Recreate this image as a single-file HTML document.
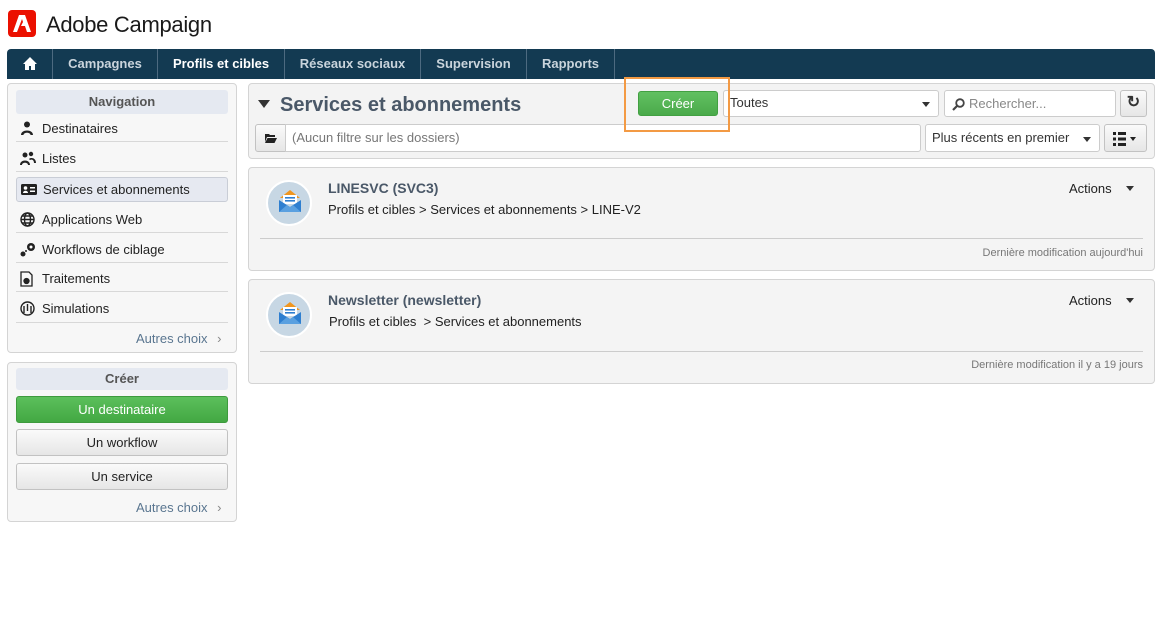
<!DOCTYPE html>
<html><head><meta charset="utf-8"><style>
*{box-sizing:border-box;margin:0;padding:0}
body{width:1163px;height:635px;background:#fff;font-family:"Liberation Sans",Arial,sans-serif;position:relative;overflow:hidden;color:#222}
.a{position:absolute}
.nav{left:7px;top:49px;width:1148px;height:30px;background:#133a52;border-radius:4px 4px 0 0}
.nav div{position:absolute;top:0;height:30px;line-height:29px;color:#c9d4dc;font-weight:bold;font-size:13px;text-align:center;border-right:1px solid #4d6a80}
.panel{background:#f7f7f7;border:1px solid #d4d4d4;border-radius:4px}
.hdr{background:#e5e9f1;border-radius:3px;text-align:center;font-weight:bold;font-size:13px;color:#555;line-height:22px}
.item{left:16px;width:212px;height:30px;border-bottom:1px solid #d8d8d8;font-size:13px;line-height:33px;padding-left:26px;color:#222}
.item svg{position:absolute;left:4px;top:9px}
.btn{left:16px;width:212px;border:1px solid #c2c2c2;border-radius:3px;background:linear-gradient(#fafafa,#e6e6e6);text-align:center;font-size:13px;line-height:25px}
.more{font-size:13px;color:#5a7690}
.inp{background:#fff;border:1px solid #ccc;border-radius:3px;font-size:13px;line-height:24px;padding-left:6px}
.card{left:248px;width:907px;background:#f4f4f4;border:1px solid #d4d4d4;border-radius:4px}
.circ{width:46px;height:46px;border-radius:50%;background:#c7d7e4;border:2px solid #fff}
</style></head><body>
<div class="a" style="left:8px;top:10px;width:28px;height:27px;background:#eb1000;border-radius:4px"></div>
<svg class="a" style="left:13px;top:15px" width="18" height="17" viewBox="0 0 18 17"><path d="M6 0H12L18 17H14L12 11H8L10 7L9 4L4 17H0Z" fill="#fff"/></svg>
<div class="a" style="left:46px;top:12px;font-size:22px;color:#1a1a1a;letter-spacing:-0.3px">Adobe Campaign</div>

<div class="a nav">
<div style="left:0;width:46px"><svg width="16" height="15" viewBox="0 0 16 15" style="margin-top:7px"><path d="M8 1L1 8H3V14H7V10H9V14H13V8H15Z" fill="#fff"/></svg></div>
<div style="left:46px;width:105px">Campagnes</div>
<div style="left:151px;width:127px;color:#fff">Profils et cibles</div>
<div style="left:278px;width:136px">Réseaux sociaux</div>
<div style="left:414px;width:106px">Supervision</div>
<div style="left:520px;width:88px">Rapports</div>
</div>

<div class="a panel" style="left:7px;top:83px;width:230px;height:270px"></div>
<div class="a hdr" style="left:16px;top:90px;width:212px;line-height:24px">Navigation</div>
<div class="a item" style="top:112px"><svg width="14" height="14" viewBox="0 0 14 14"><circle cx="7" cy="3.5" r="3" fill="#222"/><path d="M1 14C1 8 13 8 13 14H10.5C10.5 11 3.5 11 3.5 14Z" fill="#222"/></svg>Destinataires</div>
<div class="a item" style="top:142px"><svg width="16" height="14" viewBox="0 0 16 14"><circle cx="5" cy="4" r="2.5" fill="#222"/><circle cx="11" cy="3" r="2.2" fill="#222"/><path d="M0 14C0 8 10 8 10 14H8C8 11 2 11 2 14Z" fill="#222"/><path d="M9 8C11 6 16 7 16 12H14C14 9 12 8 10 9Z" fill="#222"/></svg>Listes</div>
<div class="a" style="left:16px;top:177px;width:212px;height:25px;background:#e6e9f1;border:1px solid #c9cdd6;border-radius:3px;font-size:13px;line-height:23px;padding-left:26px">Services et abonnements<svg class="a" style="left:4px;top:6px" width="16" height="11" viewBox="0 0 16 11"><rect width="16" height="11" rx="1.5" fill="#222"/><circle cx="4.5" cy="4" r="1.8" fill="#fff"/><path d="M2 9C2 6 7 6 7 9Z" fill="#fff"/><rect x="9" y="3" width="5" height="1.5" fill="#fff"/><rect x="9" y="6.5" width="5" height="1.5" fill="#fff"/></svg></div>
<div class="a item" style="top:203px"><svg width="15" height="15" viewBox="0 0 15 15" fill="none" stroke="#222" stroke-width="1.4"><circle cx="7.5" cy="7.5" r="6.5"/><ellipse cx="7.5" cy="7.5" rx="3" ry="6.5"/><path d="M1 7.5H14M2 4H13M2 11H13"/></svg>Applications Web</div>
<div class="a item" style="top:233px"><svg width="16" height="15" viewBox="0 0 16 15"><circle cx="11" cy="5" r="4" fill="#222"/><circle cx="11" cy="5" r="1.5" fill="#fff"/><circle cx="3" cy="12" r="2.5" fill="#222"/><circle cx="6" cy="9" r="1" fill="#222"/></svg>Workflows de ciblage</div>
<div class="a item" style="top:262px"><svg width="13" height="16" viewBox="0 0 13 16" fill="none" stroke="#222" stroke-width="1.3"><path d="M1 1H9L12 4V15H1Z"/><circle cx="6.5" cy="10" r="2.5" fill="#222"/></svg>Traitements</div>
<div class="a item" style="top:292px;border:none"><svg width="15" height="15" viewBox="0 0 15 15" fill="none" stroke="#222" stroke-width="1.4"><circle cx="7.5" cy="7.5" r="6.5"/><path d="M7.5 3V10M4 5V12M11 5V12"/></svg>Simulations</div>
<div class="a" style="left:16px;top:322px;width:212px;border-top:1px solid #d8d8d8"></div>
<div class="a more" style="left:136px;top:331px">Autres choix <span style="color:#888;margin-left:6px">›</span></div>

<div class="a panel" style="left:7px;top:362px;width:230px;height:160px"></div>
<div class="a hdr" style="left:16px;top:368px;width:212px">Créer</div>
<div class="a btn" style="top:396px;background:linear-gradient(#5cbf5c,#43a843);border-color:#3d9a3d;color:#fff">Un destinataire</div>
<div class="a btn" style="top:429px">Un workflow</div>
<div class="a btn" style="top:463px">Un service</div>
<div class="a more" style="left:136px;top:500px">Autres choix <span style="color:#888;margin-left:6px">›</span></div>

<div class="a panel" style="left:248px;top:83px;width:907px;height:76px;background:#f3f3f3"></div>
<div class="a" style="left:258px;top:100px;width:0;height:0;border-left:6px solid transparent;border-right:6px solid transparent;border-top:8px solid #333"></div>
<div class="a" style="left:280px;top:94px;font-size:20px;font-weight:bold;color:#4a5868">Services et abonnements</div>
<div class="a" style="left:638px;top:91px;width:80px;height:25px;background:linear-gradient(#62c062,#4aaa4a);border:1px solid #42a042;border-radius:3px;color:#fff;text-align:center;font-size:13px;line-height:23px">Créer</div>
<div class="a inp" style="left:723px;top:90px;width:216px;height:27px;color:#333">Toutes<span class="a" style="right:8px;top:11px;border-left:4px solid transparent;border-right:4px solid transparent;border-top:5px solid #333"></span></div>
<div class="a inp" style="left:944px;top:90px;width:172px;height:27px;color:#888;padding-left:24px;line-height:26px">Rechercher...<svg class="a" style="left:7px;top:7px" width="13" height="13" viewBox="0 0 13 13"><circle cx="8" cy="5" r="3.8" fill="none" stroke="#444" stroke-width="1.8"/><path d="M5.5 7.5L1 12" stroke="#444" stroke-width="2.2"/></svg></div>
<div class="a btn" style="left:1120px;top:90px;width:27px;height:27px;font-size:16px;line-height:24px;font-weight:bold;color:#333">↻</div>
<div class="a btn" style="left:255px;top:124px;width:31px;height:28px;border-radius:3px 0 0 3px"><svg width="12" height="10" viewBox="0 0 12 10" style="margin-top:8px"><path d="M0 1H4L5 2H10V4H2L0 9Z" fill="#222"/><path d="M2.5 5H12L9.5 10H0Z" fill="#222"/></svg></div>
<div class="a inp" style="left:285px;top:124px;width:636px;height:28px;color:#777;border-radius:0 3px 3px 0;line-height:26px">(Aucun filtre sur les dossiers)</div>
<div class="a inp" style="left:925px;top:124px;width:175px;height:28px;color:#333;line-height:26px">Plus récents en premier<span class="a" style="right:8px;top:12px;border-left:4px solid transparent;border-right:4px solid transparent;border-top:5px solid #333"></span></div>
<div class="a btn" style="left:1104px;top:124px;width:43px;height:28px"><svg width="30" height="14" viewBox="0 0 30 14" style="margin-top:7px"><rect x="2" y="0" width="3" height="3" fill="#222"/><rect x="7" y="0" width="8" height="3" fill="#222"/><rect x="2" y="5.5" width="3" height="3" fill="#222"/><rect x="7" y="5.5" width="8" height="3" fill="#222"/><rect x="2" y="11" width="3" height="3" fill="#222"/><rect x="7" y="11" width="8" height="3" fill="#222"/><path d="M19 5H25L22 9Z" fill="#222"/></svg></div>
<div class="a" style="left:624px;top:77px;width:106px;height:55px;border:2px solid #f39a44"></div>

<div class="a card" style="top:167px;height:104px"></div>
<div class="a card" style="top:279px;height:105px"></div>

<div class="a circ" style="left:266px;top:180px"></div>
<div class="a circ" style="left:266px;top:292px"></div>
<svg class="a" style="left:278px;top:190px" width="24" height="24" viewBox="0 0 24 24"><path d="M12 0L22 8H2Z" fill="#f0961e"/><rect x="5" y="5" width="14" height="9" fill="#fff"/><rect x="7" y="7" width="10" height="1.6" fill="#2f7fd0"/><rect x="7" y="10" width="10" height="1.6" fill="#2f7fd0"/><path d="M1 10L12 17L23 10V22H1Z" fill="#2f7fd0"/><path d="M1 22L9 15L12 17L15 15L23 22Z" fill="#5aa0e0"/></svg>
<svg class="a" style="left:278px;top:302px" width="24" height="24" viewBox="0 0 24 24"><path d="M12 0L22 8H2Z" fill="#f0961e"/><rect x="5" y="5" width="14" height="9" fill="#fff"/><rect x="7" y="7" width="10" height="1.6" fill="#2f7fd0"/><rect x="7" y="10" width="10" height="1.6" fill="#2f7fd0"/><path d="M1 10L12 17L23 10V22H1Z" fill="#2f7fd0"/><path d="M1 22L9 15L12 17L15 15L23 22Z" fill="#5aa0e0"/></svg>

<div class="a" style="left:328px;top:180px;font-size:14px;font-weight:bold;color:#4a5868">LINESVC (SVC3)</div>
<div class="a" style="left:328px;top:202px;font-size:13px">Profils et cibles &gt; Services et abonnements &gt; LINE-V2</div>
<div class="a" style="left:1069px;top:181px;font-size:13px">Actions</div>
<div class="a" style="left:1126px;top:186px;border-left:4px solid transparent;border-right:4px solid transparent;border-top:5px solid #333"></div>
<div class="a" style="left:260px;top:238px;width:883px;border-top:1px solid #ccc"></div>
<div class="a" style="right:20px;top:247px;font-size:11px;color:#777">Dernière modification aujourd'hui</div>

<div class="a" style="left:328px;top:292px;font-size:14px;font-weight:bold;color:#4a5868">Newsletter (newsletter)</div>
<div class="a" style="left:329px;top:314px;font-size:13px">Profils et cibles &nbsp;&gt; Services et abonnements</div>
<div class="a" style="left:1069px;top:293px;font-size:13px">Actions</div>
<div class="a" style="left:1126px;top:298px;border-left:4px solid transparent;border-right:4px solid transparent;border-top:5px solid #333"></div>
<div class="a" style="left:260px;top:351px;width:883px;border-top:1px solid #ccc"></div>
<div class="a" style="right:20px;top:359px;font-size:11px;color:#777">Dernière modification il y a 19 jours</div>
</body></html>
